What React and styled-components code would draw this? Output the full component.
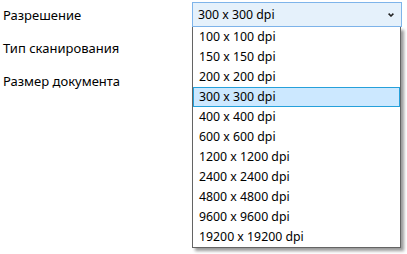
import React from 'react'
import styled, { createGlobalStyle } from 'styled-components'

const GlobalStyle = createGlobalStyle`
  html, body {
    margin: 0;
    background: #ffffff;
  }
  body {
    font-family: "Noto Sans", "Open Sans", sans-serif;
    font-size: 13px;
    color: #000000;
  }
  #root {
    min-height: 100vh;
  }
`

const Form = styled.div`
  display: flex;
  flex-direction: column;
  gap: 8px;
  padding: 2px 0 0 3px;
  width: 399px;
  min-height: 252px;
`

const Row = styled.div`
  display: grid;
  grid-template-columns: 189px 210px;
  align-items: center;
  height: 25px;
`

const Label = styled.span`
  white-space: nowrap;
`

const ComboWrap = styled.div`
  position: relative;
  height: 25px;
  font-size: 12.3px;
`

const Combo = styled.div`
  box-sizing: border-box;
  display: flex;
  align-items: center;
  justify-content: space-between;
  height: 25px;
  padding: 0 7px 0 5px;
  background: #e5f1fb;
  border: 1px solid #7eb4ea;
`

const Chevron = styled.svg`
  width: 6px;
  height: 4px;
`

const Popup = styled.ul`
  position: absolute;
  top: 25px;
  left: 0;
  width: 209px;
  box-sizing: border-box;
  margin: 0;
  padding: 0;
  list-style: none;
  background: #ffffff;
  border: 1px solid #646464;
  border-top: none;
  box-shadow: 3px 3px 3px rgba(0, 0, 0, 0.4);
  z-index: 2;
`

const Item = styled.li`
  box-sizing: border-box;
  height: 20px;
  line-height: 18px;
  padding: 0 5px;
  border: 1px solid ${p => (p.$active ? '#26a0da' : 'transparent')};
  background: ${p => (p.$active ? '#cce8ff' : 'transparent')};
  white-space: nowrap;
`

const options = [
  '100 x 100 dpi',
  '150 x 150 dpi',
  '200 x 200 dpi',
  '300 x 300 dpi',
  '400 x 400 dpi',
  '600 x 600 dpi',
  '1200 x 1200 dpi',
  '2400 x 2400 dpi',
  '4800 x 4800 dpi',
  '9600 x 9600 dpi',
  '19200 x 19200 dpi',
]

export default function App() {
  const selected = '300 x 300 dpi'
  return (
    <>
      <GlobalStyle />
      <Form>
        <Row>
          <Label>Разрешение</Label>
          <ComboWrap>
            <Combo>
              <span>{selected}</span>
              <Chevron viewBox="0 0 6 4">
                <path d="M0.6 0.6 L3 3 L5.4 0.6" fill="none" stroke="#222" strokeWidth="1.5" />
              </Chevron>
            </Combo>
            <Popup>
              {options.map(o => (
                <Item key={o} $active={o === selected}>{o}</Item>
              ))}
            </Popup>
          </ComboWrap>
        </Row>
        <Row>
          <Label>Тип сканирования</Label>
        </Row>
        <Row>
          <Label>Размер документа</Label>
        </Row>
      </Form>
    </>
  )
}
